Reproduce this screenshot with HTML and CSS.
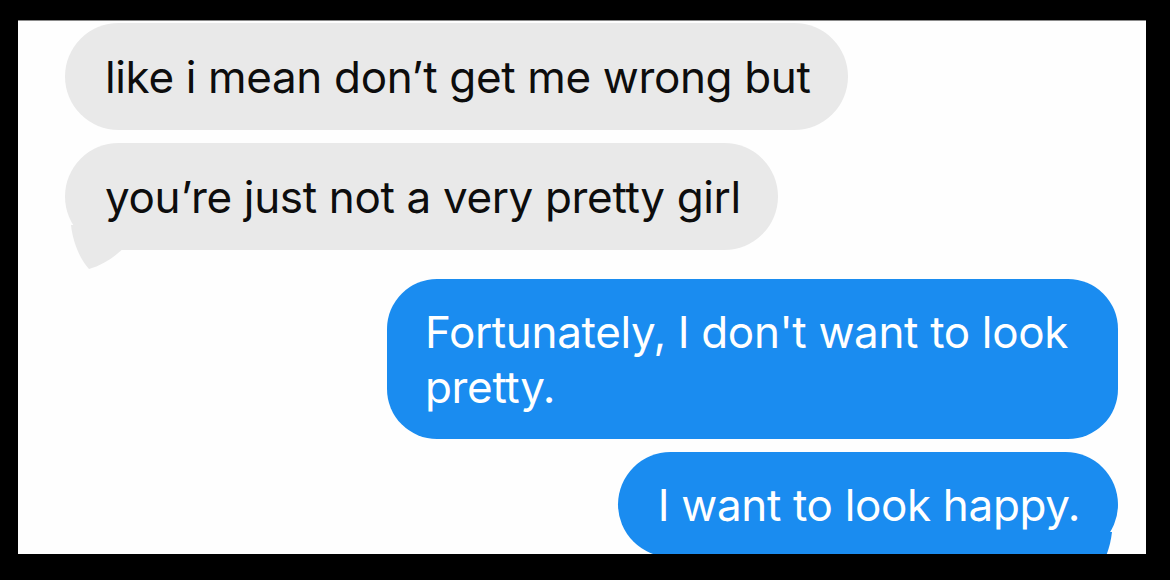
FILE: index.html
```html
<!DOCTYPE html>
<html lang="en">
<head>
<meta charset="utf-8">
<title>Messages</title>
<link rel="stylesheet" href="styles.css">
</head>
<body>
  <main class="screen">
    <section class="thread">
      <div class="row incoming">
        <p class="bubble gray">like i mean don’t get me wrong but</p>
      </div>
      <div class="row incoming">
        <p class="bubble gray has-tail">you’re just not a very pretty girl<svg class="tail tail-left" viewBox="0 0 60 46" aria-hidden="true"><path d="M4 0 C 6 18, 13 34, 22 44 C 36 40, 48 32, 60 20 L 60 0 Z"/></svg></p>
      </div>
      <div class="row outgoing">
        <p class="bubble blue wide">Fortunately, I don't want to look pretty.</p>
      </div>
      <div class="row outgoing">
        <p class="bubble blue has-tail">I want to look happy.<svg class="tail tail-right" viewBox="0 0 60 46" aria-hidden="true"><path d="M56 0 C 54 18, 47 34, 38 44 C 24 40, 12 32, 0 20 L 0 0 Z"/></svg></p>
      </div>
    </section>
  </main>
</body>
</html>
```

FILE: styles.css
```css
* {
  box-sizing: border-box;
}

html,
body {
  margin: 0;
  height: 100%;
  background: #000;
}

body {
  padding: 20px 24px 26px 18px;
}

.screen {
  height: 534px;
  background: #fefefe;
  border-top: 1px solid #8a8a8a;
  overflow: hidden;
}

.thread {
  display: flex;
  flex-direction: column;
  padding: 2px 28px 0 47px;
  font-family: Inter, "Liberation Sans", Arial, sans-serif;
  font-size: 44px;
  line-height: 55px;
  letter-spacing: -0.35px;
}

.row {
  display: flex;
}

.row.incoming {
  justify-content: flex-start;
}

.row.outgoing {
  justify-content: flex-end;
}

.row + .row {
  margin-top: 13px;
}

.row.incoming + .row.outgoing {
  margin-top: 29px;
}

.bubble {
  position: relative;
  margin: 0;
  padding: 27px 37px 25px 40px;
  border-radius: 54px;
}

.gray {
  background: #e9e9e9;
  color: #0d0d0d;
}

.blue {
  background: #1a8cf0;
  color: #fff;
  padding: 26px 38px 24px 40px;
}

.wide {
  max-width: 731px;
  padding-left: 38px;
  border-radius: 50px;
}

.tail {
  position: absolute;
  bottom: -21px;
  width: 60px;
  height: 46px;
}

.gray .tail path {
  fill: #e9e9e9;
}

.blue .tail path {
  fill: #1a8cf0;
}

.tail-left {
  left: 2px;
}

.tail-right {
  right: 2px;
}
```
